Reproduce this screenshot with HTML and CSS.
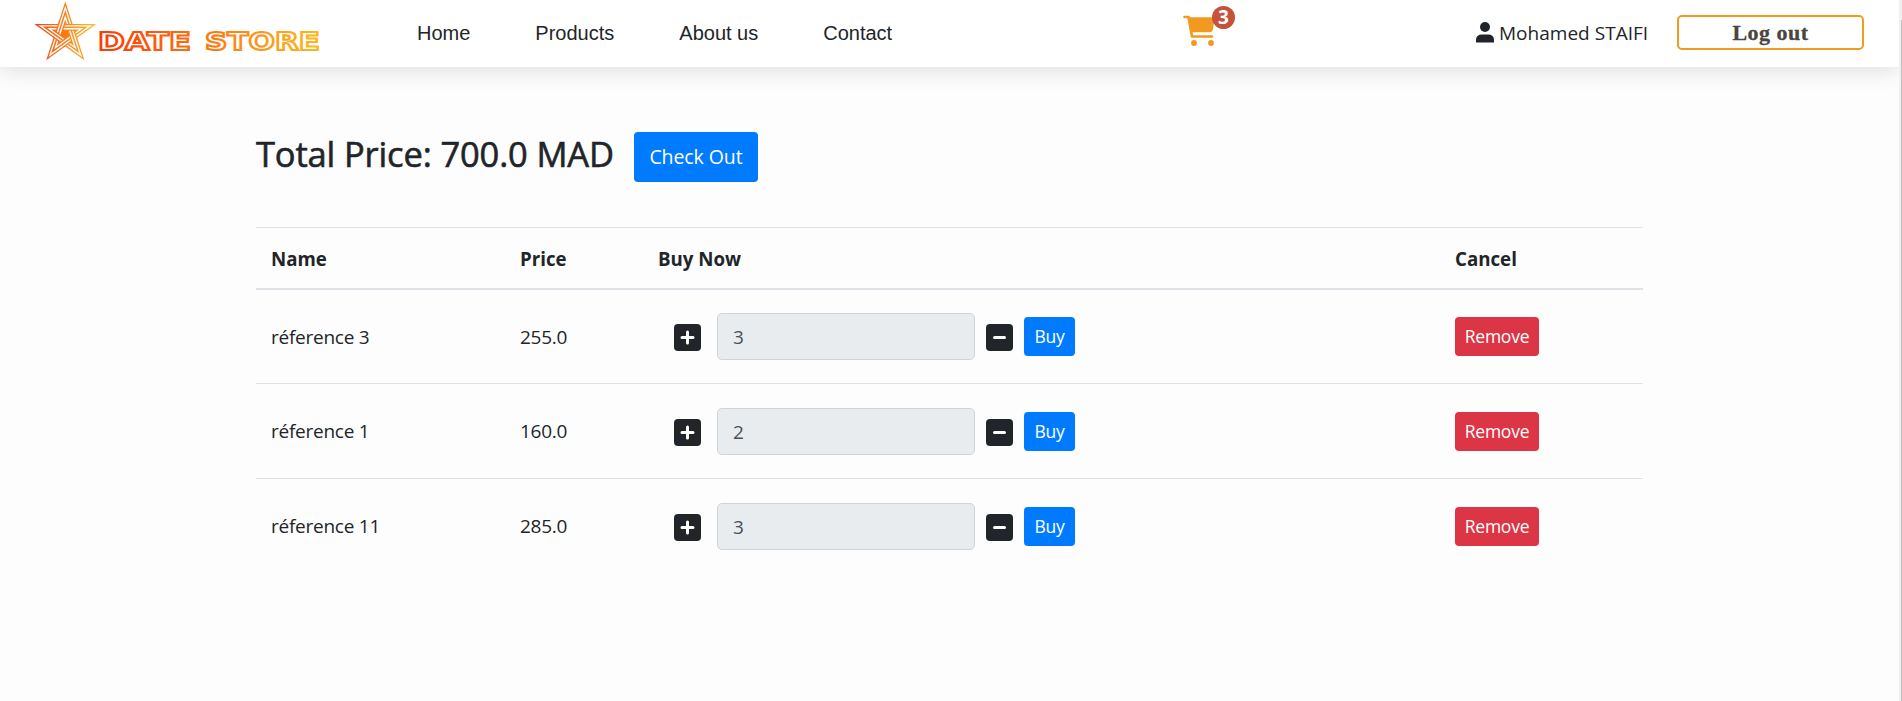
FILE: index.html
```html
<!DOCTYPE html>
<html lang="en">
<head>
<meta charset="utf-8">
<title>Date Store</title>
<link rel="stylesheet" href="styles.css">
</head>
<body>
<header class="navbar">
  <a class="logo">
    <svg width="300" height="66" viewBox="0 0 300 66">
      <defs>
        <linearGradient id="star" gradientUnits="userSpaceOnUse" x1="-30" y1="0" x2="30" y2="0"><stop offset="0" stop-color="#f4420f"/><stop offset="1" stop-color="#fcc02a"/></linearGradient>
        <linearGradient id="word" gradientUnits="userSpaceOnUse" x1="68" y1="0" x2="289" y2="0"><stop offset="0" stop-color="#fb3a05"/><stop offset="1" stop-color="#fbb91d"/></linearGradient>
        <path id="bands" d="M0-21.500-12.640 17.390 20.450-6.640H-20.450L12.640 17.390Z"/>
        <path id="over" d="M-3.540-10.610-6.190-2.440M-3.370 10.660 3.570 5.610M9-6.640H.410M-11.180.090-4.240 5.130M9.100 6.500 6.450-1.670"/>
      </defs>
      <g transform="translate(35.300 34)" fill="none" stroke="url(#star)">
        <path d="M0 8 7.600 2.500 4.700-6.500H-4.700L-7.600 2.500Z" fill="#fb7a10" stroke="none"/>
        <use href="#bands" stroke-width="6.800"/>
        <use href="#bands" stroke="#fff" stroke-width="4.200"/>
        <use href="#bands" stroke-width="1.500"/>
        <use href="#over" stroke-width="6.800"/>
        <use href="#over" stroke="#fff" stroke-width="4.200"/>
        <use href="#over" stroke-width="1.500"/>
      </g>
      <g class="wordmark" fill="#fff" stroke="url(#word)" stroke-width="2.100">
        <text x="68" y="49.500" textLength="93" lengthAdjust="spacingAndGlyphs">DATE</text>
        <text x="175" y="49.500" textLength="115" lengthAdjust="spacingAndGlyphs">STORE</text>
      </g>
    </svg>
  </a>
  <nav class="links"><a>Home</a><a>Products</a><a>About us</a><a>Contact</a></nav>
  <a class="cart">
    <svg width="33" height="31" viewBox="0 0 33 31" fill="none" stroke="#f09a1f" stroke-linecap="round" stroke-linejoin="round">
      <path d="M6 3H31L29 15Q28.500 16.500 27 16.500H8.500Z" fill="#f09a1f" stroke-width="1.500"/>
      <path d="M1.500 2H5.500L9 21.500H29" stroke-width="2.600"/>
      <circle cx="11" cy="28" r="2.900" fill="#f09a1f" stroke="none"/><circle cx="28" cy="28" r="2.900" fill="#f09a1f" stroke="none"/>
    </svg>
    <span class="badge">3</span>
  </a>
  <div class="user">
    <svg width="18" height="21" viewBox="0 0 18 21" fill="#212529"><circle cx="9" cy="5" r="5"/><path d="M0 20.500V18Q0 12.500 6 12.500H12Q18 12.500 18 18V20.500Z"/></svg>
    <span>Mohamed STAIFI</span>
  </div>
  <a class="logout">Log out</a>
</header>
<main class="container">
  <div class="total"><h1>Total Price: 700.0 MAD</h1><a class="btn checkout">Check Out</a></div>
  <div class="table">
    <div class="row head"><span>Name</span><span>Price</span><span>Buy Now</span><span>Cancel</span></div>
    <div class="row"><span>réference 3</span><span>255.0</span>
      <div class="qty"><svg class="sq" viewBox="0 0 27 27"><rect width="27" height="27" rx="4"/><path d="M13.500 8V19M8 13.500H19"/></svg><span class="input">3</span><svg class="sq" viewBox="0 0 27 27"><rect width="27" height="27" rx="4"/><path d="M8.500 13.500H18.500"/></svg><a class="btn buy">Buy</a></div>
      <a class="btn remove">Remove</a></div>
    <div class="row"><span>réference 1</span><span>160.0</span>
      <div class="qty"><svg class="sq" viewBox="0 0 27 27"><rect width="27" height="27" rx="4"/><path d="M13.500 8V19M8 13.500H19"/></svg><span class="input">2</span><svg class="sq" viewBox="0 0 27 27"><rect width="27" height="27" rx="4"/><path d="M8.500 13.500H18.500"/></svg><a class="btn buy">Buy</a></div>
      <a class="btn remove">Remove</a></div>
    <div class="row"><span>réference 11</span><span>285.0</span>
      <div class="qty"><svg class="sq" viewBox="0 0 27 27"><rect width="27" height="27" rx="4"/><path d="M13.500 8V19M8 13.500H19"/></svg><span class="input">3</span><svg class="sq" viewBox="0 0 27 27"><rect width="27" height="27" rx="4"/><path d="M8.500 13.500H18.500"/></svg><a class="btn buy">Buy</a></div>
      <a class="btn remove">Remove</a></div>
  </div>
</main>
<div class="scrollbar"></div>
</body>
</html>
```
FILE: styles.css
```css
* { box-sizing: border-box; }
body { margin: 0; height: 701px; overflow: hidden; background: #fdfdfd; color: #212529; font: 19px/28px "Open Sans", "Noto Sans", sans-serif; letter-spacing: -0.25px; }
svg { display: block; flex: none; }
.navbar { display: flex; height: 67px; width: 1899px; background: #fff; box-shadow: 0 4px 20px rgba(0, 0, 0, .12); padding-left: 30px; }
.logo { width: 387px; }
.wordmark { font: bold 25px "DejaVu Sans", sans-serif; letter-spacing: 0; }
.links { display: flex; gap: 65px; width: 766px; padding-top: 19px; font: 20px/28px "Liberation Sans", sans-serif; letter-spacing: 0; }
.cart { position: relative; width: 293px; padding-top: 15px; }
.badge { position: absolute; left: 29px; top: 6px; width: 23px; height: 23px; border-radius: 50%; background: #c5533b; color: #fff; font: bold 19px/22px "Open Sans", sans-serif; text-align: center; letter-spacing: 0; }
.user { display: flex; width: 201px; gap: 5px; padding-top: 22px; white-space: nowrap; letter-spacing: 0.02px; }
.user span { margin-top: -3px; }
.logout { width: 187px; height: 35px; margin-top: 15px; border: 2px solid #f09a1f; border-radius: 5px; text-align: center; font: bold 22px/31px "Liberation Serif", serif; letter-spacing: .5px; color: #4a4541; -webkit-text-stroke: .3px #4a4541; }
.container { width: 1387px; margin-left: 256px; padding-top: 65px; }
.total { display: flex; height: 95px; }
h1 { margin: 0; width: 378px; font-weight: 500; font-size: 34.500px; line-height: 44px; letter-spacing: -0.150px; white-space: nowrap; -webkit-text-stroke: .6px #212529; }
.btn { display: block; border-radius: 4px; color: #fff; text-align: center; background: #007bff; }
.checkout { width: 124px; height: 50px; line-height: 49px; font-size: 19.500px; letter-spacing: -0.080px; }
.row { display: grid; grid-template-columns: 249px 138px 797px 1fr; height: 95px; align-items: center; padding-left: 15px; border-top: 1px solid #dee2e6; }
.head { height: 63px; padding-top: 2px; font-weight: 700; font-size: 18.700px; letter-spacing: 0; border-bottom: 2px solid #dee2e6; }
.head + .row { height: 93px; border-top: 0; }
.qty { display: flex; align-items: center; padding-left: 16px; }
.sq { position: relative; top: 1px; width: 27px; height: 27px; fill: #212529; stroke: #fff; stroke-width: 3; stroke-linecap: round; }
.sq rect { stroke: none; }
.input { width: 258px; height: 47px; margin: 0 11px 0 16px; padding: 9px 15px; border: 1px solid #ced4da; border-radius: 5px; background: #e9ecef; color: #495057; }
.buy { width: 51px; height: 39px; margin-left: 11px; line-height: 39px; font-size: 17.500px; }
.remove { width: 84px; height: 39px; line-height: 39px; font-size: 17.500px; background: #dc3545; }
.scrollbar { position: absolute; right: 0; top: 0; width: 3px; height: 701px; background: linear-gradient(#f0f0f0 20px, transparent 20px), linear-gradient(90deg, #f0f0f0 2px, #c1c1c1 2px); }
```
